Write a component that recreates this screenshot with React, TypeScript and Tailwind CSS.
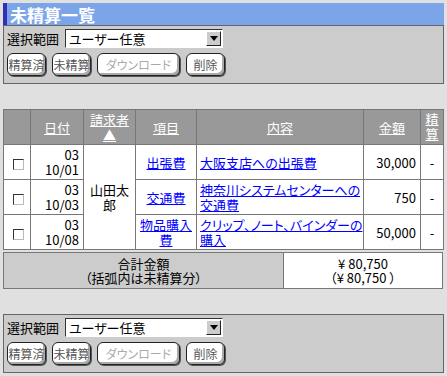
import React from 'react';

// 未精算一覧 — expense list with range selector panels above and below

const rows = [
  { yy: '03', md: '10/01', item: ['出張費'], detail: ['大阪支店への出張費'], amount: '30,000' },
  { yy: '03', md: '10/03', item: ['交通費'], detail: ['神奈川システムセンターへの', '交通費'], amount: '750' },
  { yy: '03', md: '10/08', item: ['物品購入', '費'], detail: ['クリップ、ノート、バインダーの', '購入'], amount: '50,000' },
];

function Lines({ parts }: { parts: string[] }) {
  return (
    <>
      {parts.map((p, i) => (
        <React.Fragment key={i}>
          {i > 0 && <br />}
          {p}
        </React.Fragment>
      ))}
    </>
  );
}

function Btn({ label, w, dim }: { label: string; w: string; dim?: boolean }) {
  return (
    <button
      className={
        'flex h-[23px] items-center justify-center rounded-[6px] border border-[#222] bg-white text-[12px] leading-none shadow-[inset_-2px_-2px_0_#aaa,1px_1px_0_#555] ' +
        w +
        (dim ? ' text-[#aaa]' : ' text-[#555]')
      }
    >
      {label}
    </button>
  );
}

function RangePanel() {
  return (
    <div className="border border-[#666] bg-[#cccccc] pl-[3px] pt-[3px] pb-[7px]">
      <div className="flex h-[19px] items-center">
        <span className="w-[58px] text-[13px] leading-[19px] text-black">選択範囲</span>
        <div className="flex h-[19px] w-[158px] items-center border border-t-[#333] border-l-[#333] border-r-white border-b-white bg-white">
          <span className="flex-1 pl-[3px] text-[13px] leading-[17px] text-black">ユーザー任意</span>
          <span className="mr-[1px] flex h-[15px] w-[15px] items-center justify-center border border-t-white border-l-white border-r-[#222] border-b-[#222] bg-[#cccccc]">
            <svg width="8" height="5" viewBox="0 0 8 5">
              <path d="M0 0h8L4 5z" fill="#000" />
            </svg>
          </span>
        </div>
      </div>
      <div className="mt-[5px] flex gap-[6px]">
        <Btn label="精算済" w="w-[39px]" />
        <Btn label="未精算" w="w-[39px]" />
        <Btn label="ダウンロード" w="w-[83px]" dim />
        <Btn label="削除" w="w-[39px]" />
      </div>
    </div>
  );
}

export default function App() {
  const th = 'border border-[#777] bg-[#999999] p-0 text-center font-normal text-white';
  const td = 'border border-[#777] bg-white p-0';
  return (
    <div className="min-h-[376px] w-[447px] bg-[#e0e0e0] px-[3px] pt-[3px] font-['Noto_Sans_CJK_JP',sans-serif] [font-feature-settings:'palt'] text-black">
      <div className="flex h-[22px] items-center border-l-[4px] border-[#3030b0] bg-[#7ca5e9] pl-[3px] text-[17px] font-bold leading-none text-white">
        未精算一覧
      </div>
      <RangePanel />

      <table className="mt-[25px] w-[440px] table-fixed border-collapse border border-[#777] text-[13px] leading-[15px]">
        <colgroup>
          <col className="w-[27px]" />
          <col className="w-[53px]" />
          <col className="w-[52px]" />
          <col className="w-[61px]" />
          <col className="w-[167px]" />
          <col className="w-[57px]" />
          <col className="w-[23px]" />
        </colgroup>
        <thead>
          <tr className="h-[35px]">
            <th className={th}></th>
            <th className={th}><span className="underline">日付</span></th>
            <th className={th + ' align-top pt-[2px]'}>
              <span className="underline">請求者</span>
              <br />
              <span className="underline">▲</span>
            </th>
            <th className={th}><span className="underline">項目</span></th>
            <th className={th}><span className="underline">内容</span></th>
            <th className={th}><span className="underline">金額</span></th>
            <th className={th + ' align-top pt-[1px]'}>
              <span className="underline">精</span>
              <br />
              <span className="underline">算</span>
            </th>
          </tr>
        </thead>
        <tbody>
          {rows.map((r, i) => (
            <tr key={i} className="h-[35px]">
              <td className={td + ' text-center'}>
                <span className="inline-block h-[11px] w-[11px] translate-x-[1px] translate-y-[2px] border border-t-[#333] border-l-[#333] border-r-[#bbb] border-b-[#bbb] bg-white" />
              </td>
              <td className={td + ' pr-[4px] text-right'}>
                {r.yy}
                <br />
                {r.md}
              </td>
              {i === 0 && (
                <td rowSpan={3} className={td + ' text-center'}>
                  山田太
                  <br />
                  郎
                </td>
              )}
              <td className={td + ' text-center'}>
                <a className="text-[#0000ff] underline"><Lines parts={r.item} /></a>
              </td>
              <td className={td + ' pl-[3px] text-left'}>
                <a className="text-[#0000ff] underline"><Lines parts={r.detail} /></a>
              </td>
              <td className={td + ' pr-[4px] text-right'}>{r.amount}</td>
              <td className={td + ' text-center'}>-</td>
            </tr>
          ))}
        </tbody>
      </table>

      <table className="mt-[2px] w-[440px] table-fixed border-collapse border border-[#777] text-[13px] leading-[14px]">
        <tbody>
          <tr className="h-[36px]">
            <td className="w-[280px] border border-[#777] bg-[#cccccc] p-0 text-center">
              合計金額
              <br />
              （括弧内は未精算分）
            </td>
            <td className="border border-[#777] bg-white p-0 text-center">
              ¥ 80,750
              <br />
              （¥ 80,750 ）
            </td>
          </tr>
        </tbody>
      </table>

      <div className="mt-[25px]">
        <RangePanel />
      </div>
    </div>
  );
}
